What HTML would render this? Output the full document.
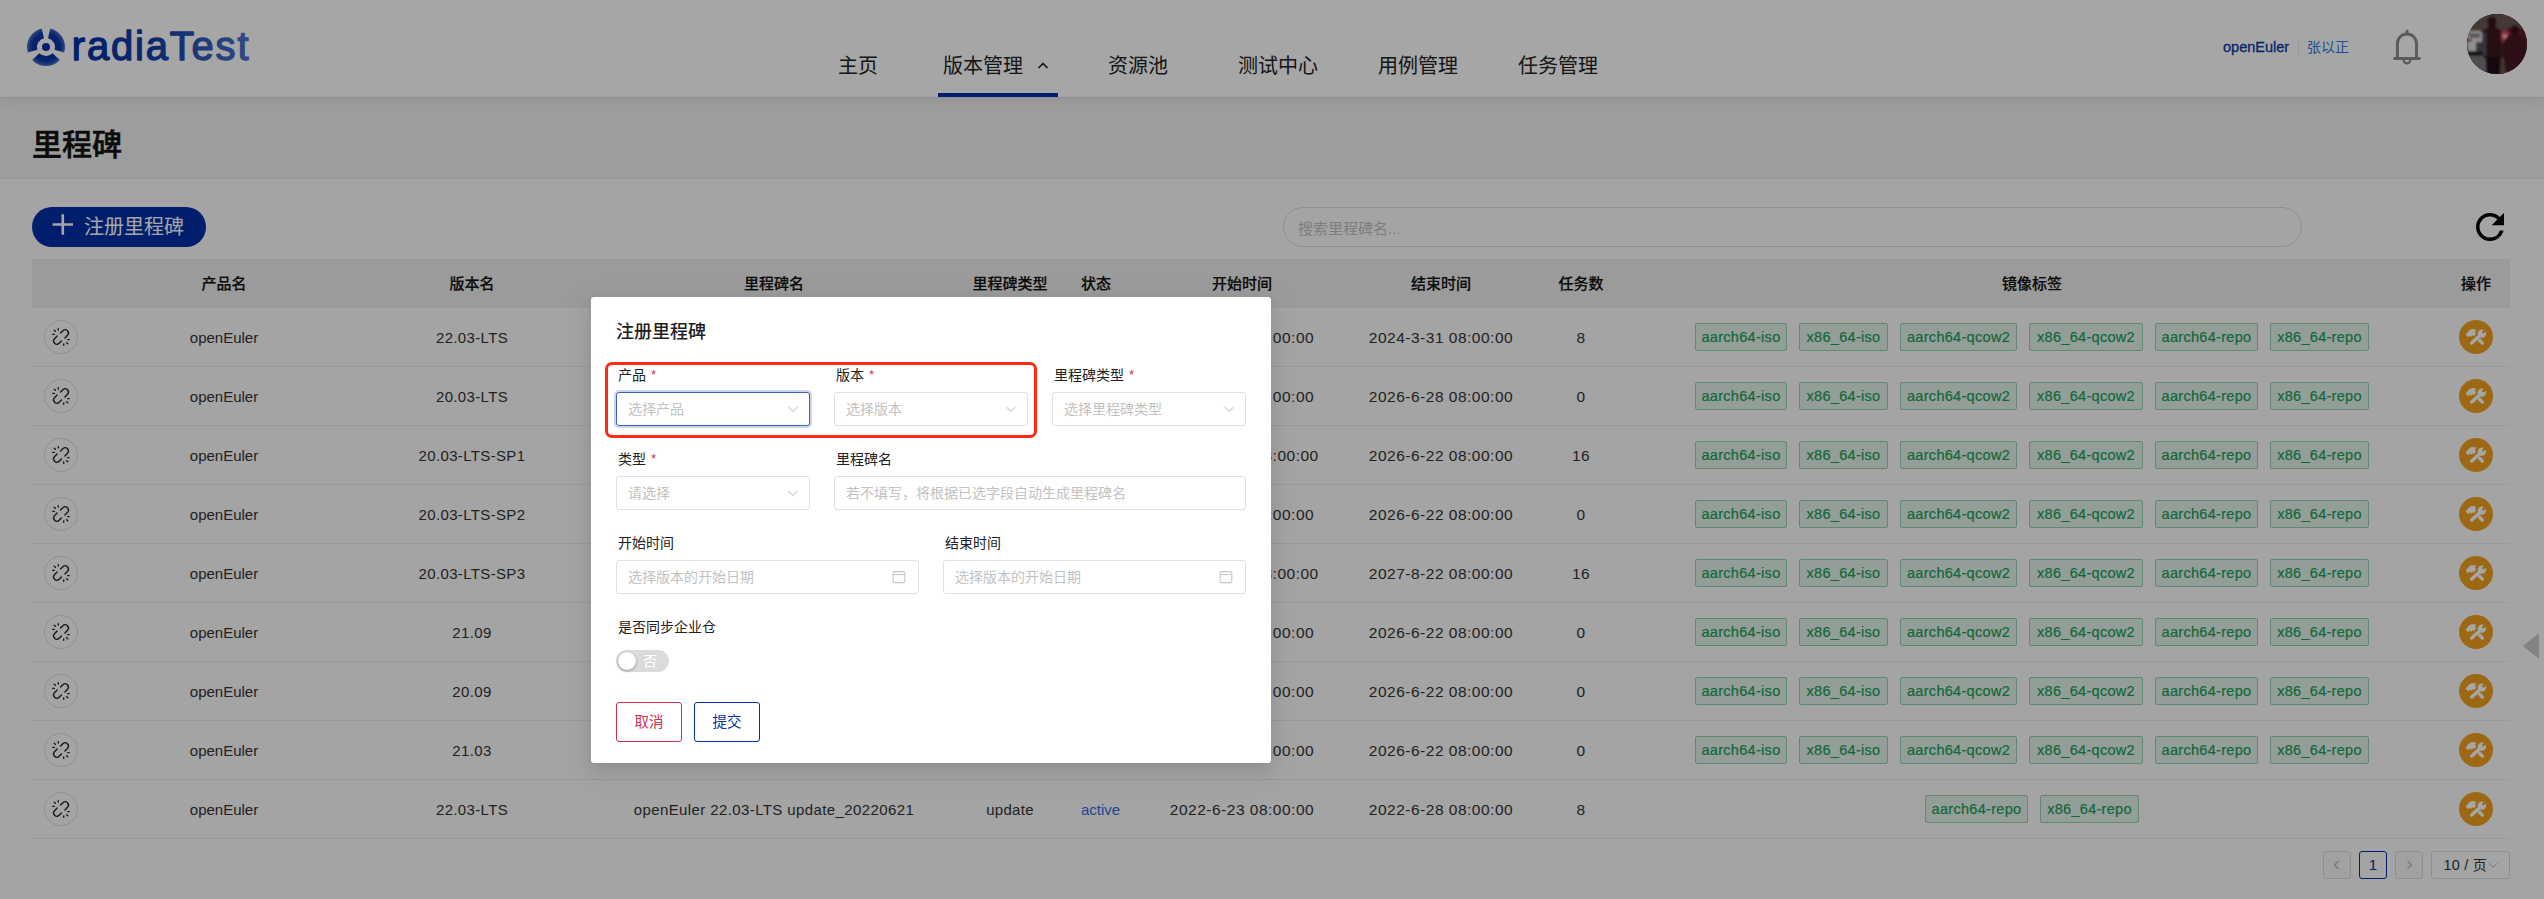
<!DOCTYPE html>
<html lang="zh-CN">
<head>
<meta charset="utf-8">
<title>radiaTest - 里程碑</title>
<style>
*{box-sizing:border-box;margin:0;padding:0}
html,body{width:2544px;height:899px;overflow:hidden;background:#fcfcfc}
body{font-family:"Liberation Sans","Noto Sans CJK SC",sans-serif;color:#333;position:relative;font-size:15px}
.abs{position:absolute}
/* header */
#header{position:absolute;left:0;top:0;width:2544px;height:98px;background:#fff;border-bottom:1px solid #dadae6;box-shadow:0 2px 14px rgba(0,0,20,.07);z-index:2}
#logo{position:absolute;left:26px;top:27px;width:40px;height:40px}
#brand{position:absolute;left:70px;top:22px;font-family:"Liberation Sans",sans-serif}
.nav{position:absolute;top:51px;height:30px;line-height:30px;font-size:20px;color:#222;white-space:nowrap}
#nav-line{position:absolute;left:938px;top:93px;width:120px;height:4px;background:#002fa7}
#org{position:absolute;left:2223px;top:36px;height:22px;line-height:22px;font-size:14.5px;color:#0a37a8;-webkit-text-stroke:.3px #0a37a8;white-space:nowrap}
#divider{position:absolute;left:2298px;top:39px;width:1px;height:16px;background:#e6e6ea}
#user{position:absolute;left:2307px;top:36px;height:22px;line-height:22px;font-size:14px;color:#2f7be0;white-space:nowrap}
#bell{position:absolute;left:2390px;top:26px;width:34px;height:42px}
#avatar{position:absolute;left:2467px;top:14px;width:60px;height:60px;border-radius:50%;overflow:hidden;background:#3a1a1e}
/* title band */
#band{position:absolute;left:0;top:96px;width:2544px;height:83px;background:#f1f1f1;border-bottom:1px solid #ececf0}
#band h1{position:absolute;left:32px;top:26px;font-size:30px;line-height:46px;font-weight:500;color:#111;-webkit-text-stroke:.55px #111}
/* toolbar */
#create{position:absolute;left:32px;top:207px;width:174px;height:40px;border-radius:20px;background:#002fa7;color:#fff;font-size:20px;line-height:41.5px;padding-left:52px;white-space:nowrap}
#create svg{position:absolute;left:20px;top:7px}
#search{position:absolute;left:1283px;top:207px;width:1019px;height:40px;border-radius:20px;border:1px solid #dcdce2;background:#fcfcfc;font-size:15px;line-height:41px;padding-left:14px;color:#c2c2c2}
#refresh{position:absolute;left:2469px;top:206px;width:42px;height:42px}
/* table */
#table{position:absolute;left:32px;top:259px;width:2478px}
.tr{position:relative;height:59px;border-bottom:1px solid #ececf3;width:2478px}
.th{position:relative;height:49px;background:#eeeeee;font-weight:500;color:#111;font-size:15px;-webkit-text-stroke:.2px #111}
.th .td{padding-bottom:2px;padding-top:0;font-size:15px;letter-spacing:0}
.td{position:absolute;top:0;height:100%;display:flex;align-items:center;justify-content:center;white-space:nowrap}
.c1{left:0;width:58px}
.c2{left:58px;width:268px}
.c3{left:326px;width:228px;letter-spacing:.35px}
.c4{left:554px;width:376px;letter-spacing:.4px}
.c5{left:930px;width:96px;letter-spacing:.3px}
.c6{left:1026px;width:84px;justify-content:flex-start;padding-left:23px}
.c7{left:1110px;width:200px;padding-top:1.5px;font-size:15.5px;letter-spacing:.5px}
.c8{left:1310px;width:198px;padding-top:1.5px;font-size:15.5px;letter-spacing:.5px}
.c9{left:1508px;width:82px;padding-top:1.5px;font-size:15.5px;letter-spacing:.5px}
.c10{left:1590px;width:820px}
.c11{left:2410px;width:68px}
.lk{width:34px;height:34px;border-radius:50%;border:1px solid #dcdce6;display:block}
.lk svg{display:block}
.op{width:34px;height:34px;border-radius:50%;background:#f0a020;display:flex;align-items:center;justify-content:center}
.tag{display:inline-block;height:28px;line-height:26px;padding:0;text-align:center;letter-spacing:.3px;border:1px solid #8fd4ad;background:#e4f3ea;color:#18a058;-webkit-text-stroke:.2px #18a058;font-size:14.5px;border-radius:2px;margin:0 6px}
.active{color:#2d6fdc}
/* pagination */
.pg{position:absolute;top:851px;height:28px;line-height:26px;border:1px solid #dcdce0;border-radius:3px;text-align:center;font-size:15px;color:#333;background:transparent}
/* mask */
#mask{position:absolute;left:0;top:0;width:2544px;height:899px;background:rgba(0,0,0,.35);z-index:10}
/* modal */
#modal{position:absolute;left:591px;top:297px;width:680px;height:466px;background:#fff;border-radius:3px;z-index:20;box-shadow:0 3px 6px -4px rgba(0,0,0,.10),0 6px 16px 0 rgba(0,0,0,.07),0 9px 28px 8px rgba(0,0,0,.05);font-size:14px;color:#222}
#modal h2{position:absolute;left:25px;top:20.7px;font-size:18px;line-height:28px;font-weight:500;color:#1f2225}
.lb{position:absolute;height:20px;line-height:20px;font-size:14px;color:#222;white-space:nowrap}
.lb i{font-style:normal;color:#d03050;margin-left:5px;font-size:13px;position:relative;top:-1px;font-family:"Liberation Sans",sans-serif}
.inp{position:absolute;height:34px;border:1px solid #e0e0e6;border-radius:3px;line-height:32px;padding-left:11px;font-size:14px;color:#c2c2c2;white-space:nowrap;background:#fff}
.inp.focus{border-color:#3c63bf;box-shadow:0 0 0 2px rgba(0,47,167,.2)}
.inp svg{position:absolute;right:8px;top:8px}
.inp svg.cal{right:11px;top:8px}
#hl{position:absolute;left:14px;top:65px;width:432px;height:76px;border:3px solid #ff2a12;border-radius:7px}
#sw{position:absolute;left:25px;top:353px;width:53px;height:22px;border-radius:11px;background:#dbdbdb}
#sw b{position:absolute;left:2px;top:2px;width:18px;height:18px;border-radius:50%;background:#fff;box-shadow:0 1px 3px rgba(0,0,0,.35)}
#sw span{position:absolute;left:27px;top:0;line-height:22px;font-size:14px;color:#fff}
.btn{position:absolute;top:405px;width:66px;height:40px;border-radius:3px;line-height:38px;text-align:center;font-size:14.5px;background:#fff}
</style>
</head>
<body>
<div id="header">
<svg id="logo" viewBox="0 0 40 40"><defs><radialGradient id="lg" cx="20" cy="20" r="19.5" gradientUnits="userSpaceOnUse"><stop offset="0" stop-color="#002fa7"/><stop offset=".72" stop-color="#0a36a8"/><stop offset="1" stop-color="#5273c8"/></radialGradient></defs><path fill="url(#lg)" d="M38.17 25.56A19 19 0 0 0 24.27 1.49L22.02 11.23A9 9 0 0 1 28.61 22.63ZM15.73 1.49A19 19 0 0 0 1.83 25.56L11.39 22.63A9 9 0 0 1 17.98 11.23ZM6.10 32.96A19 19 0 0 0 33.90 32.96L26.58 26.14A9 9 0 0 1 13.42 26.14Z"/><circle cx="20" cy="20" r="4" fill="#002fa7"/></svg>
<svg id="brand" width="200" height="60" viewBox="0 0 200 60"><defs><linearGradient id="bg" x1="0" x2="178" y1="0" y2="0" gradientUnits="userSpaceOnUse"><stop offset="0" stop-color="#002fa7"/><stop offset=".5" stop-color="#1440ac"/><stop offset="1" stop-color="#4d70cc"/></linearGradient></defs><text x="1.8" y="38.4" font-size="40" letter-spacing="1.8" fill="url(#bg)" stroke="url(#bg)" stroke-width="1.3" stroke-linejoin="round">radiaTest</text></svg>
<div class="nav" style="left:838px">主页</div>
<div class="nav" style="left:943px">版本管理</div>
<svg class="abs" style="left:1036px;top:59px" width="14" height="14" viewBox="0 0 14 14"><path d="M2.5 9L7 4.5L11.5 9" fill="none" stroke="#222" stroke-width="1.7"/></svg>
<div class="nav" style="left:1108px">资源池</div>
<div class="nav" style="left:1238px">测试中心</div>
<div class="nav" style="left:1378px">用例管理</div>
<div class="nav" style="left:1518px">任务管理</div>
<div id="nav-line"></div>
<div id="org">openEuler</div>
<div id="divider"></div>
<div id="user">张以正</div>
<svg id="bell" viewBox="0 0 34 42"><g fill="none" stroke="#8a8a8f" stroke-width="2.9" stroke-linecap="round"><path d="M7.4 32.5V17.6a9.55 9.55 0 0 1 19.1 0V32.5"/><path d="M4.6 32.5H29.4"/><path d="M17 5.2V7.5"/><path d="M13.6 34a3.4 3.4 0 0 0 6.8 0" stroke-width="2.2"/></g></svg>
<div id="avatar"><svg width="60" height="60" viewBox="0 0 60 60"><defs><radialGradient id="gl"><stop offset="0" stop-color="#fff0ee"/><stop offset=".3" stop-color="#f06070"/><stop offset="1" stop-color="#a01828" stop-opacity="0"/></radialGradient><filter id="bl"><feGaussianBlur stdDeviation="0.9"/></filter></defs><rect width="60" height="60" fill="#4a2a2e"/><g filter="url(#bl)"><rect x="0" y="0" width="60" height="22" fill="#6a5852"/><rect x="40" y="14" width="20" height="46" fill="#5e1c28"/><rect x="0" y="36" width="22" height="24" fill="#7a7a80"/><rect x="30" y="44" width="12" height="16" fill="#6a5650"/><rect x="0" y="17" width="15" height="20" rx="3" fill="#dcdcdc"/><rect x="2" y="19" width="11" height="5" fill="#8a8a90"/><rect x="0" y="25" width="5" height="2.4" fill="#b02030"/><rect x="9" y="28" width="6" height="9" fill="#55555c"/><rect x="0" y="37" width="16" height="5" fill="#2a2226"/><circle cx="38" cy="22.5" r="9" fill="url(#gl)"/><path d="M15 17Q25 9 34 16L34.500 44H16Z" fill="#3e171f"/><rect x="15.500" y="18" width="3.500" height="24" rx="1.500" fill="#55555e"/><circle cx="25" cy="7" r="4.600" fill="#30141a"/><rect x="21" y="9" width="8" height="6" fill="#30141a"/><path d="M18.500 43H34L33 60H19.500Z" fill="#220c12"/><path d="M36 30Q40 19 48 19Q57 20 59 30V58H38Z" fill="#451220"/><circle cx="47.700" cy="15.500" r="4.200" fill="#3a1018"/></g></svg></div>
</div>
<div id="band"><h1>里程碑</h1></div>
<div id="create"><svg width="24" height="26" viewBox="0 0 24 26"><path d="M10.8 0.3V20.7M0.6 10.5H21" stroke="#fff" stroke-width="2.6" fill="none"/></svg>注册里程碑</div>
<div id="search">搜索里程碑名...</div>
<svg id="refresh" viewBox="0 0 24 24"><path fill="#000" d="M17.65 6.35A7.958 7.958 0 0 0 12 4c-4.42 0-7.99 3.58-7.99 8s3.57 8 7.99 8c3.73 0 6.84-2.55 7.73-6h-2.08A5.99 5.99 0 0 1 12 18c-3.31 0-6-2.69-6-6s2.69-6 6-6c1.66 0 3.14.69 4.22 1.78L13 11h7V4l-2.35 2.35z"/></svg>
<div id="table">
<div class="th"><div class="td c1"></div><div class="td c2">产品名</div><div class="td c3">版本名</div><div class="td c4">里程碑名</div><div class="td c5">里程碑类型</div><div class="td c6">状态</div><div class="td c7">开始时间</div><div class="td c8">结束时间</div><div class="td c9">任务数</div><div class="td c10">镜像标签</div><div class="td c11">操作</div></div>
<div class="tr"><div class="td c1"><span class="lk"><svg width="32" height="32" viewBox="1 1 32 32"><g fill="none" stroke="#222" stroke-width="1.35" stroke-linecap="round"><path d="M16.5 13.04L18.87 10.67A3.3 3.3 0 0 1 23.53 15.33L20.9 17.96"/><path d="M17.5 20.96L15.13 23.33A3.3 3.3 0 0 1 10.47 18.67L13.1 16.04"/><path d="M14.3 8.7V10M10.2 10.3L11.4 11.3M8.8 14.4H10.3M23.7 19.6H25.2M22.6 22.7L23.8 23.7M19.7 24V25.3"/></g></svg></span></div><div class="td c2">openEuler</div><div class="td c3">22.03-LTS</div><div class="td c4">openEuler 22.03-LTS release</div><div class="td c5">release</div><div class="td c6 active">active</div><div class="td c7">2022-3-30 08:00:00</div><div class="td c8">2024-3-31 08:00:00</div><div class="td c9">8</div><div class="td c10"><span class="tag" style="width:92px">aarch64-iso</span><span class="tag" style="width:89px">x86_64-iso</span><span class="tag" style="width:117px">aarch64-qcow2</span><span class="tag" style="width:114px">x86_64-qcow2</span><span class="tag" style="width:103px">aarch64-repo</span><span class="tag" style="width:99px">x86_64-repo</span></div><div class="td c11"><span class="op"><svg width="34" height="34" viewBox="0 0 34 34"><path d="M12.7 23L22.6 13.9" stroke="#fff" stroke-width="3.4" stroke-linecap="round" fill="none"/><circle cx="22.9" cy="13.6" r="4.2" fill="#fff"/><path d="M23.7 12.8L28.5 8" stroke="#f0a020" stroke-width="2.5" fill="none"/><path d="M20.6 20.3L23.4 23.1" stroke="#fff" stroke-width="3.4" stroke-linecap="round" fill="none"/><path d="M7 14.6L8.6 12.4Q11 8.8 14.5 9.2L17 10L15.6 11.6L16.8 13.2L15.2 15.8L13.8 14.8L12.6 16.6L11 15.2L9.2 17Z" fill="#fff" stroke="#fff" stroke-width=".6" stroke-linejoin="round"/></svg></span></div></div>
<div class="tr"><div class="td c1"><span class="lk"><svg width="32" height="32" viewBox="1 1 32 32"><g fill="none" stroke="#222" stroke-width="1.35" stroke-linecap="round"><path d="M16.5 13.04L18.87 10.67A3.3 3.3 0 0 1 23.53 15.33L20.9 17.96"/><path d="M17.5 20.96L15.13 23.33A3.3 3.3 0 0 1 10.47 18.67L13.1 16.04"/><path d="M14.3 8.7V10M10.2 10.3L11.4 11.3M8.8 14.4H10.3M23.7 19.6H25.2M22.6 22.7L23.8 23.7M19.7 24V25.3"/></g></svg></span></div><div class="td c2">openEuler</div><div class="td c3">20.03-LTS</div><div class="td c4">openEuler 20.03-LTS release</div><div class="td c5">release</div><div class="td c6 active">active</div><div class="td c7">2020-3-27 08:00:00</div><div class="td c8">2026-6-28 08:00:00</div><div class="td c9">0</div><div class="td c10"><span class="tag" style="width:92px">aarch64-iso</span><span class="tag" style="width:89px">x86_64-iso</span><span class="tag" style="width:117px">aarch64-qcow2</span><span class="tag" style="width:114px">x86_64-qcow2</span><span class="tag" style="width:103px">aarch64-repo</span><span class="tag" style="width:99px">x86_64-repo</span></div><div class="td c11"><span class="op"><svg width="34" height="34" viewBox="0 0 34 34"><path d="M12.7 23L22.6 13.9" stroke="#fff" stroke-width="3.4" stroke-linecap="round" fill="none"/><circle cx="22.9" cy="13.6" r="4.2" fill="#fff"/><path d="M23.7 12.8L28.5 8" stroke="#f0a020" stroke-width="2.5" fill="none"/><path d="M20.6 20.3L23.4 23.1" stroke="#fff" stroke-width="3.4" stroke-linecap="round" fill="none"/><path d="M7 14.6L8.6 12.4Q11 8.8 14.5 9.2L17 10L15.6 11.6L16.8 13.2L15.2 15.8L13.8 14.8L12.6 16.6L11 15.2L9.2 17Z" fill="#fff" stroke="#fff" stroke-width=".6" stroke-linejoin="round"/></svg></span></div></div>
<div class="tr"><div class="td c1"><span class="lk"><svg width="32" height="32" viewBox="1 1 32 32"><g fill="none" stroke="#222" stroke-width="1.35" stroke-linecap="round"><path d="M16.5 13.04L18.87 10.67A3.3 3.3 0 0 1 23.53 15.33L20.9 17.96"/><path d="M17.5 20.96L15.13 23.33A3.3 3.3 0 0 1 10.47 18.67L13.1 16.04"/><path d="M14.3 8.7V10M10.2 10.3L11.4 11.3M8.8 14.4H10.3M23.7 19.6H25.2M22.6 22.7L23.8 23.7M19.7 24V25.3"/></g></svg></span></div><div class="td c2">openEuler</div><div class="td c3">20.03-LTS-SP1</div><div class="td c4">openEuler 20.03-LTS-SP1 release</div><div class="td c5">release</div><div class="td c6 active">active</div><div class="td c7">2020-12-30 08:00:00</div><div class="td c8">2026-6-22 08:00:00</div><div class="td c9">16</div><div class="td c10"><span class="tag" style="width:92px">aarch64-iso</span><span class="tag" style="width:89px">x86_64-iso</span><span class="tag" style="width:117px">aarch64-qcow2</span><span class="tag" style="width:114px">x86_64-qcow2</span><span class="tag" style="width:103px">aarch64-repo</span><span class="tag" style="width:99px">x86_64-repo</span></div><div class="td c11"><span class="op"><svg width="34" height="34" viewBox="0 0 34 34"><path d="M12.7 23L22.6 13.9" stroke="#fff" stroke-width="3.4" stroke-linecap="round" fill="none"/><circle cx="22.9" cy="13.6" r="4.2" fill="#fff"/><path d="M23.7 12.8L28.5 8" stroke="#f0a020" stroke-width="2.5" fill="none"/><path d="M20.6 20.3L23.4 23.1" stroke="#fff" stroke-width="3.4" stroke-linecap="round" fill="none"/><path d="M7 14.6L8.6 12.4Q11 8.8 14.5 9.2L17 10L15.6 11.6L16.8 13.2L15.2 15.8L13.8 14.8L12.6 16.6L11 15.2L9.2 17Z" fill="#fff" stroke="#fff" stroke-width=".6" stroke-linejoin="round"/></svg></span></div></div>
<div class="tr"><div class="td c1"><span class="lk"><svg width="32" height="32" viewBox="1 1 32 32"><g fill="none" stroke="#222" stroke-width="1.35" stroke-linecap="round"><path d="M16.5 13.04L18.87 10.67A3.3 3.3 0 0 1 23.53 15.33L20.9 17.96"/><path d="M17.5 20.96L15.13 23.33A3.3 3.3 0 0 1 10.47 18.67L13.1 16.04"/><path d="M14.3 8.7V10M10.2 10.3L11.4 11.3M8.8 14.4H10.3M23.7 19.6H25.2M22.6 22.7L23.8 23.7M19.7 24V25.3"/></g></svg></span></div><div class="td c2">openEuler</div><div class="td c3">20.03-LTS-SP2</div><div class="td c4">openEuler 20.03-LTS-SP2 release</div><div class="td c5">release</div><div class="td c6 active">active</div><div class="td c7">2021-6-30 08:00:00</div><div class="td c8">2026-6-22 08:00:00</div><div class="td c9">0</div><div class="td c10"><span class="tag" style="width:92px">aarch64-iso</span><span class="tag" style="width:89px">x86_64-iso</span><span class="tag" style="width:117px">aarch64-qcow2</span><span class="tag" style="width:114px">x86_64-qcow2</span><span class="tag" style="width:103px">aarch64-repo</span><span class="tag" style="width:99px">x86_64-repo</span></div><div class="td c11"><span class="op"><svg width="34" height="34" viewBox="0 0 34 34"><path d="M12.7 23L22.6 13.9" stroke="#fff" stroke-width="3.4" stroke-linecap="round" fill="none"/><circle cx="22.9" cy="13.6" r="4.2" fill="#fff"/><path d="M23.7 12.8L28.5 8" stroke="#f0a020" stroke-width="2.5" fill="none"/><path d="M20.6 20.3L23.4 23.1" stroke="#fff" stroke-width="3.4" stroke-linecap="round" fill="none"/><path d="M7 14.6L8.6 12.4Q11 8.8 14.5 9.2L17 10L15.6 11.6L16.8 13.2L15.2 15.8L13.8 14.8L12.6 16.6L11 15.2L9.2 17Z" fill="#fff" stroke="#fff" stroke-width=".6" stroke-linejoin="round"/></svg></span></div></div>
<div class="tr"><div class="td c1"><span class="lk"><svg width="32" height="32" viewBox="1 1 32 32"><g fill="none" stroke="#222" stroke-width="1.35" stroke-linecap="round"><path d="M16.5 13.04L18.87 10.67A3.3 3.3 0 0 1 23.53 15.33L20.9 17.96"/><path d="M17.5 20.96L15.13 23.33A3.3 3.3 0 0 1 10.47 18.67L13.1 16.04"/><path d="M14.3 8.7V10M10.2 10.3L11.4 11.3M8.8 14.4H10.3M23.7 19.6H25.2M22.6 22.7L23.8 23.7M19.7 24V25.3"/></g></svg></span></div><div class="td c2">openEuler</div><div class="td c3">20.03-LTS-SP3</div><div class="td c4">openEuler 20.03-LTS-SP3 release</div><div class="td c5">release</div><div class="td c6 active">active</div><div class="td c7">2021-12-30 08:00:00</div><div class="td c8">2027-8-22 08:00:00</div><div class="td c9">16</div><div class="td c10"><span class="tag" style="width:92px">aarch64-iso</span><span class="tag" style="width:89px">x86_64-iso</span><span class="tag" style="width:117px">aarch64-qcow2</span><span class="tag" style="width:114px">x86_64-qcow2</span><span class="tag" style="width:103px">aarch64-repo</span><span class="tag" style="width:99px">x86_64-repo</span></div><div class="td c11"><span class="op"><svg width="34" height="34" viewBox="0 0 34 34"><path d="M12.7 23L22.6 13.9" stroke="#fff" stroke-width="3.4" stroke-linecap="round" fill="none"/><circle cx="22.9" cy="13.6" r="4.2" fill="#fff"/><path d="M23.7 12.8L28.5 8" stroke="#f0a020" stroke-width="2.5" fill="none"/><path d="M20.6 20.3L23.4 23.1" stroke="#fff" stroke-width="3.4" stroke-linecap="round" fill="none"/><path d="M7 14.6L8.6 12.4Q11 8.8 14.5 9.2L17 10L15.6 11.6L16.8 13.2L15.2 15.8L13.8 14.8L12.6 16.6L11 15.2L9.2 17Z" fill="#fff" stroke="#fff" stroke-width=".6" stroke-linejoin="round"/></svg></span></div></div>
<div class="tr"><div class="td c1"><span class="lk"><svg width="32" height="32" viewBox="1 1 32 32"><g fill="none" stroke="#222" stroke-width="1.35" stroke-linecap="round"><path d="M16.5 13.04L18.87 10.67A3.3 3.3 0 0 1 23.53 15.33L20.9 17.96"/><path d="M17.5 20.96L15.13 23.33A3.3 3.3 0 0 1 10.47 18.67L13.1 16.04"/><path d="M14.3 8.7V10M10.2 10.3L11.4 11.3M8.8 14.4H10.3M23.7 19.6H25.2M22.6 22.7L23.8 23.7M19.7 24V25.3"/></g></svg></span></div><div class="td c2">openEuler</div><div class="td c3">21.09</div><div class="td c4">openEuler 21.09 release</div><div class="td c5">release</div><div class="td c6 active">active</div><div class="td c7">2021-9-30 08:00:00</div><div class="td c8">2026-6-22 08:00:00</div><div class="td c9">0</div><div class="td c10"><span class="tag" style="width:92px">aarch64-iso</span><span class="tag" style="width:89px">x86_64-iso</span><span class="tag" style="width:117px">aarch64-qcow2</span><span class="tag" style="width:114px">x86_64-qcow2</span><span class="tag" style="width:103px">aarch64-repo</span><span class="tag" style="width:99px">x86_64-repo</span></div><div class="td c11"><span class="op"><svg width="34" height="34" viewBox="0 0 34 34"><path d="M12.7 23L22.6 13.9" stroke="#fff" stroke-width="3.4" stroke-linecap="round" fill="none"/><circle cx="22.9" cy="13.6" r="4.2" fill="#fff"/><path d="M23.7 12.8L28.5 8" stroke="#f0a020" stroke-width="2.5" fill="none"/><path d="M20.6 20.3L23.4 23.1" stroke="#fff" stroke-width="3.4" stroke-linecap="round" fill="none"/><path d="M7 14.6L8.6 12.4Q11 8.8 14.5 9.2L17 10L15.6 11.6L16.8 13.2L15.2 15.8L13.8 14.8L12.6 16.6L11 15.2L9.2 17Z" fill="#fff" stroke="#fff" stroke-width=".6" stroke-linejoin="round"/></svg></span></div></div>
<div class="tr"><div class="td c1"><span class="lk"><svg width="32" height="32" viewBox="1 1 32 32"><g fill="none" stroke="#222" stroke-width="1.35" stroke-linecap="round"><path d="M16.5 13.04L18.87 10.67A3.3 3.3 0 0 1 23.53 15.33L20.9 17.96"/><path d="M17.5 20.96L15.13 23.33A3.3 3.3 0 0 1 10.47 18.67L13.1 16.04"/><path d="M14.3 8.7V10M10.2 10.3L11.4 11.3M8.8 14.4H10.3M23.7 19.6H25.2M22.6 22.7L23.8 23.7M19.7 24V25.3"/></g></svg></span></div><div class="td c2">openEuler</div><div class="td c3">20.09</div><div class="td c4">openEuler 20.09 release</div><div class="td c5">release</div><div class="td c6 active">active</div><div class="td c7">2020-9-30 08:00:00</div><div class="td c8">2026-6-22 08:00:00</div><div class="td c9">0</div><div class="td c10"><span class="tag" style="width:92px">aarch64-iso</span><span class="tag" style="width:89px">x86_64-iso</span><span class="tag" style="width:117px">aarch64-qcow2</span><span class="tag" style="width:114px">x86_64-qcow2</span><span class="tag" style="width:103px">aarch64-repo</span><span class="tag" style="width:99px">x86_64-repo</span></div><div class="td c11"><span class="op"><svg width="34" height="34" viewBox="0 0 34 34"><path d="M12.7 23L22.6 13.9" stroke="#fff" stroke-width="3.4" stroke-linecap="round" fill="none"/><circle cx="22.9" cy="13.6" r="4.2" fill="#fff"/><path d="M23.7 12.8L28.5 8" stroke="#f0a020" stroke-width="2.5" fill="none"/><path d="M20.6 20.3L23.4 23.1" stroke="#fff" stroke-width="3.4" stroke-linecap="round" fill="none"/><path d="M7 14.6L8.6 12.4Q11 8.8 14.5 9.2L17 10L15.6 11.6L16.8 13.2L15.2 15.8L13.8 14.8L12.6 16.6L11 15.2L9.2 17Z" fill="#fff" stroke="#fff" stroke-width=".6" stroke-linejoin="round"/></svg></span></div></div>
<div class="tr"><div class="td c1"><span class="lk"><svg width="32" height="32" viewBox="1 1 32 32"><g fill="none" stroke="#222" stroke-width="1.35" stroke-linecap="round"><path d="M16.5 13.04L18.87 10.67A3.3 3.3 0 0 1 23.53 15.33L20.9 17.96"/><path d="M17.5 20.96L15.13 23.33A3.3 3.3 0 0 1 10.47 18.67L13.1 16.04"/><path d="M14.3 8.7V10M10.2 10.3L11.4 11.3M8.8 14.4H10.3M23.7 19.6H25.2M22.6 22.7L23.8 23.7M19.7 24V25.3"/></g></svg></span></div><div class="td c2">openEuler</div><div class="td c3">21.03</div><div class="td c4">openEuler 21.03 release</div><div class="td c5">release</div><div class="td c6 active">active</div><div class="td c7">2021-3-30 08:00:00</div><div class="td c8">2026-6-22 08:00:00</div><div class="td c9">0</div><div class="td c10"><span class="tag" style="width:92px">aarch64-iso</span><span class="tag" style="width:89px">x86_64-iso</span><span class="tag" style="width:117px">aarch64-qcow2</span><span class="tag" style="width:114px">x86_64-qcow2</span><span class="tag" style="width:103px">aarch64-repo</span><span class="tag" style="width:99px">x86_64-repo</span></div><div class="td c11"><span class="op"><svg width="34" height="34" viewBox="0 0 34 34"><path d="M12.7 23L22.6 13.9" stroke="#fff" stroke-width="3.4" stroke-linecap="round" fill="none"/><circle cx="22.9" cy="13.6" r="4.2" fill="#fff"/><path d="M23.7 12.8L28.5 8" stroke="#f0a020" stroke-width="2.5" fill="none"/><path d="M20.6 20.3L23.4 23.1" stroke="#fff" stroke-width="3.4" stroke-linecap="round" fill="none"/><path d="M7 14.6L8.6 12.4Q11 8.8 14.5 9.2L17 10L15.6 11.6L16.8 13.2L15.2 15.8L13.8 14.8L12.6 16.6L11 15.2L9.2 17Z" fill="#fff" stroke="#fff" stroke-width=".6" stroke-linejoin="round"/></svg></span></div></div>
<div class="tr"><div class="td c1"><span class="lk"><svg width="32" height="32" viewBox="1 1 32 32"><g fill="none" stroke="#222" stroke-width="1.35" stroke-linecap="round"><path d="M16.5 13.04L18.87 10.67A3.3 3.3 0 0 1 23.53 15.33L20.9 17.96"/><path d="M17.5 20.96L15.13 23.33A3.3 3.3 0 0 1 10.47 18.67L13.1 16.04"/><path d="M14.3 8.7V10M10.2 10.3L11.4 11.3M8.8 14.4H10.3M23.7 19.6H25.2M22.6 22.7L23.8 23.7M19.7 24V25.3"/></g></svg></span></div><div class="td c2">openEuler</div><div class="td c3">22.03-LTS</div><div class="td c4">openEuler 22.03-LTS update_20220621</div><div class="td c5">update</div><div class="td c6 active">active</div><div class="td c7">2022-6-23 08:00:00</div><div class="td c8">2022-6-28 08:00:00</div><div class="td c9">8</div><div class="td c10"><span class="tag" style="width:103px">aarch64-repo</span><span class="tag" style="width:99px">x86_64-repo</span></div><div class="td c11"><span class="op"><svg width="34" height="34" viewBox="0 0 34 34"><path d="M12.7 23L22.6 13.9" stroke="#fff" stroke-width="3.4" stroke-linecap="round" fill="none"/><circle cx="22.9" cy="13.6" r="4.2" fill="#fff"/><path d="M23.7 12.8L28.5 8" stroke="#f0a020" stroke-width="2.5" fill="none"/><path d="M20.6 20.3L23.4 23.1" stroke="#fff" stroke-width="3.4" stroke-linecap="round" fill="none"/><path d="M7 14.6L8.6 12.4Q11 8.8 14.5 9.2L17 10L15.6 11.6L16.8 13.2L15.2 15.8L13.8 14.8L12.6 16.6L11 15.2L9.2 17Z" fill="#fff" stroke="#fff" stroke-width=".6" stroke-linejoin="round"/></svg></span></div></div>
</div>
<div class="pg" style="left:2323px;width:28px;background:#f8f8fa"><svg width="12" height="12" viewBox="0 0 12 12" style="vertical-align:-1px"><path d="M7.5 2L3.5 6L7.5 10" fill="none" stroke="#b8b8b8" stroke-width="1.2"/></svg></div>
<div class="pg" style="left:2359px;width:28px;border-color:#002fa7;color:#002fa7">1</div>
<div class="pg" style="left:2395px;width:28px;background:#f8f8fa"><svg width="12" height="12" viewBox="0 0 12 12" style="vertical-align:-1px"><path d="M4.5 2L8.5 6L4.5 10" fill="none" stroke="#b8b8b8" stroke-width="1.2"/></svg></div>
<div class="pg" style="left:2431px;width:79px;text-align:left;padding-left:11.5px;font-size:14.5px;letter-spacing:.2px;line-height:27px">10 / <span style="font-size:14px">页</span><svg width="12" height="12" viewBox="0 0 12 12" style="position:absolute;right:10px;top:7px"><path d="M1.5 4.2L6 8.2L10.5 4.2" fill="none" stroke="#cfcfcf" stroke-width="1.1"/></svg></div>
<svg id="side" class="abs" style="left:2522px;top:632px" width="18" height="28" viewBox="0 0 18 28"><path d="M17 1V27L1 14Z" fill="#c9c9c9"/></svg>
<div id="mask"></div>
<div id="modal">
<h2>注册里程碑</h2>
<div class="lb" style="left:27px;top:68px">产品<i>*</i></div>
<div class="lb" style="left:245px;top:68px">版本<i>*</i></div>
<div class="lb" style="left:463px;top:68px">里程碑类型<i>*</i></div>
<div class="inp focus" style="left:25px;top:95px;width:194px">选择产品<svg width="16" height="16" viewBox="0 0 16 16"><path d="M3.2 5.8L8 10.4L12.8 5.8" fill="none" stroke="#d0d0d0" stroke-width="1.1"/></svg></div>
<div class="inp" style="left:243px;top:95px;width:194px">选择版本<svg width="16" height="16" viewBox="0 0 16 16"><path d="M3.2 5.8L8 10.4L12.8 5.8" fill="none" stroke="#d0d0d0" stroke-width="1.1"/></svg></div>
<div class="inp" style="left:461px;top:95px;width:194px">选择里程碑类型<svg width="16" height="16" viewBox="0 0 16 16"><path d="M3.2 5.8L8 10.4L12.8 5.8" fill="none" stroke="#d0d0d0" stroke-width="1.1"/></svg></div>
<div id="hl"></div>
<div class="lb" style="left:27px;top:152px">类型<i>*</i></div>
<div class="lb" style="left:245px;top:152px">里程碑名</div>
<div class="inp" style="left:25px;top:179px;width:194px">请选择<svg width="16" height="16" viewBox="0 0 16 16"><path d="M3.2 5.8L8 10.4L12.8 5.8" fill="none" stroke="#d0d0d0" stroke-width="1.1"/></svg></div>
<div class="inp" style="left:243px;top:179px;width:412px">若不填写，将根据已选字段自动生成里程碑名</div>
<div class="lb" style="left:27px;top:236px">开始时间</div>
<div class="lb" style="left:354px;top:236px">结束时间</div>
<div class="inp" style="left:25px;top:263px;width:303px">选择版本的开始日期<svg class="cal" width="16" height="16" viewBox="0 0 16 16"><g fill="none" stroke="#c8c8c8" stroke-width="1.1"><rect x="2.2" y="2.6" width="11.6" height="11" rx="1.2"/><path d="M2.2 5.6H13.8"/></g></svg></div>
<div class="inp" style="left:352px;top:263px;width:303px">选择版本的开始日期<svg class="cal" width="16" height="16" viewBox="0 0 16 16"><g fill="none" stroke="#c8c8c8" stroke-width="1.1"><rect x="2.2" y="2.6" width="11.6" height="11" rx="1.2"/><path d="M2.2 5.6H13.8"/></g></svg></div>
<div class="lb" style="left:27px;top:320px">是否同步企业仓</div>
<div id="sw"><b></b><span>否</span></div>
<div class="btn" style="left:25px;border:1px solid #d03050;color:#d03050">取消</div>
<div class="btn" style="left:103px;border:1px solid #002fa7;color:#002fa7">提交</div>
</div>
</body>
</html>
